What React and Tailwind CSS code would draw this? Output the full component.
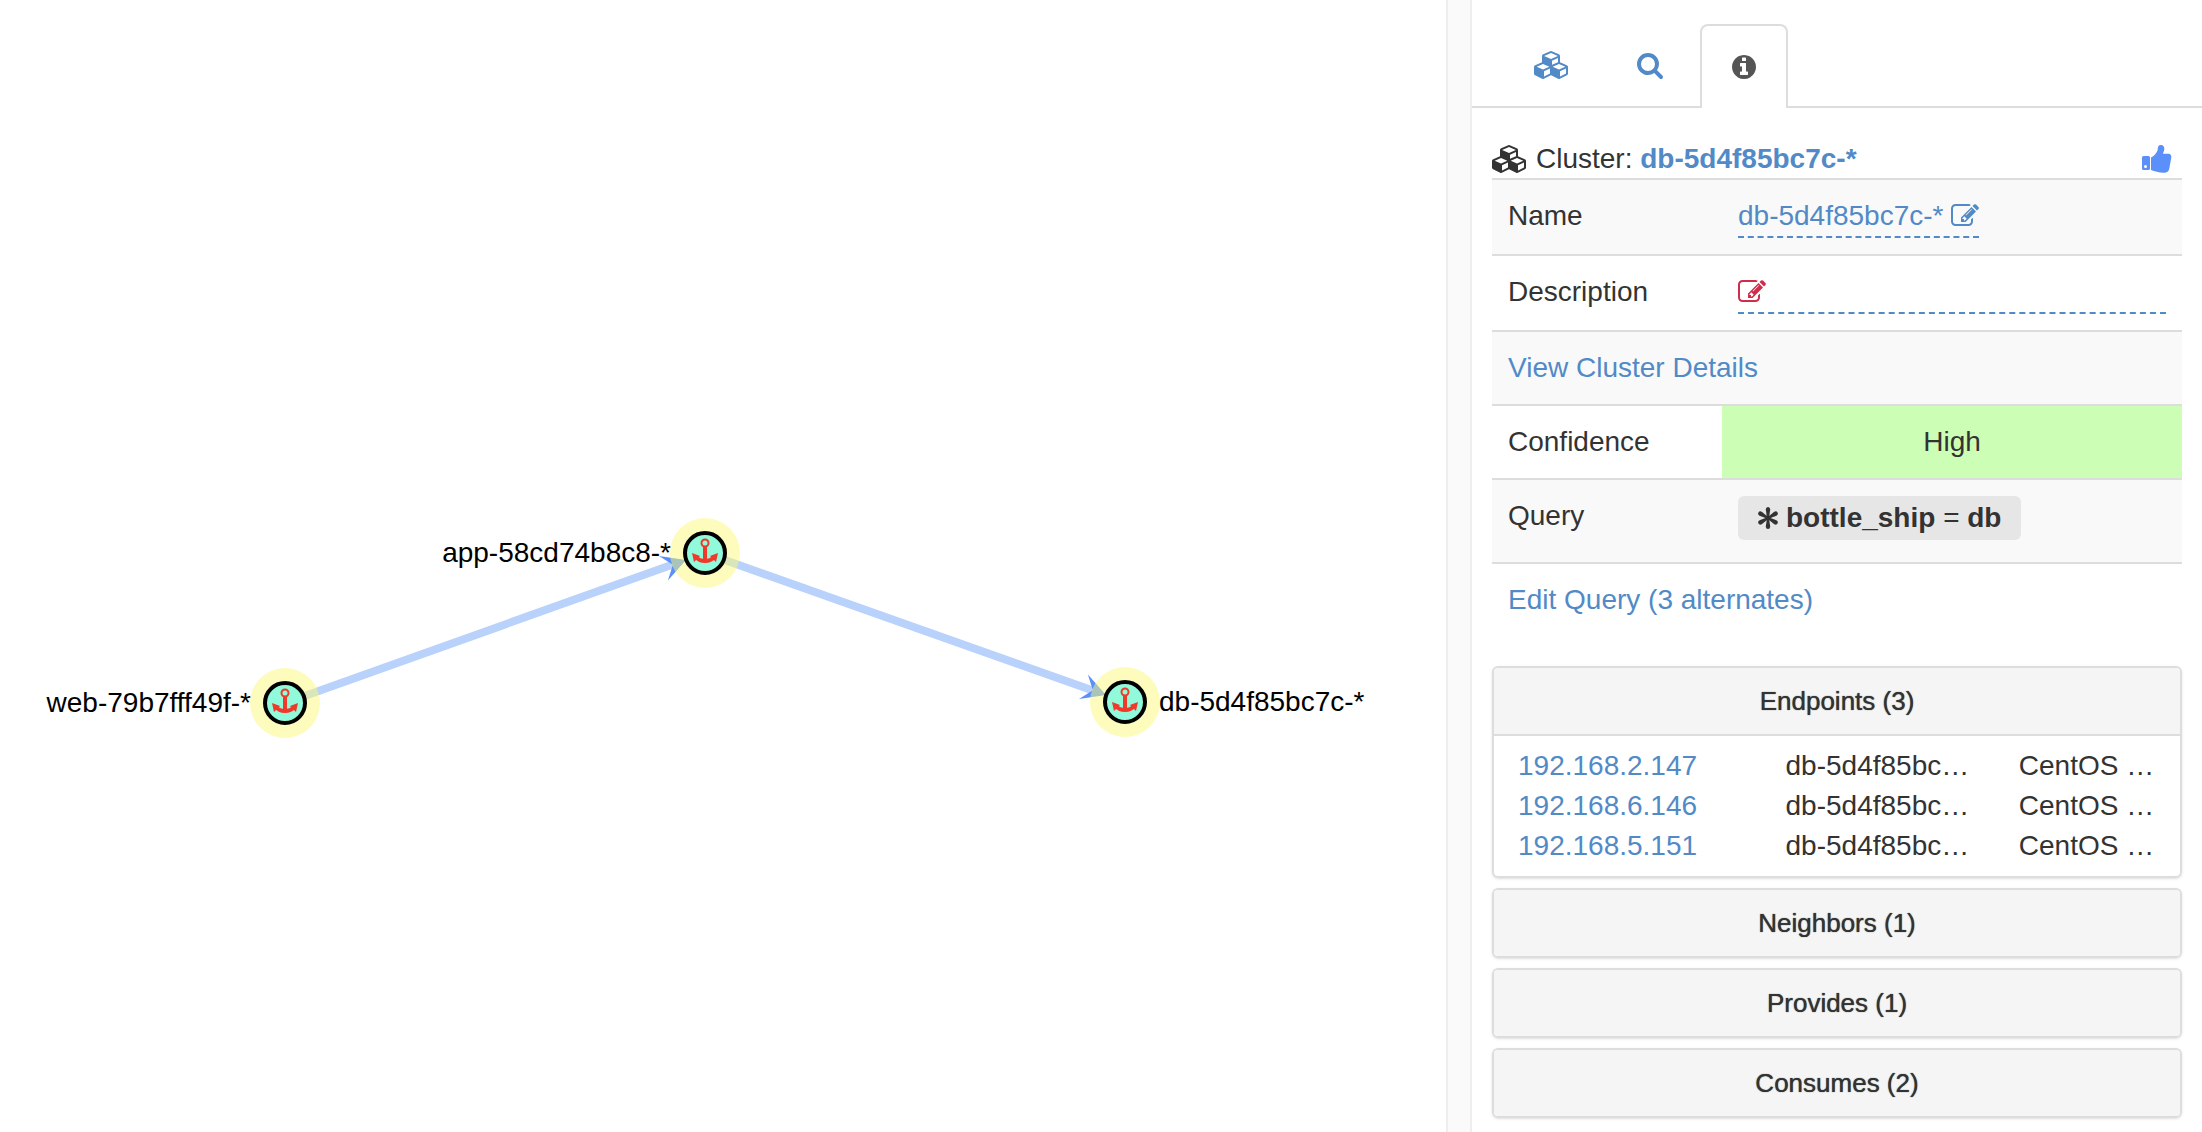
function Icon({ d, width = 1792, className }) {
  return (
    <svg viewBox={`0 0 ${width} 1792`} className={className} fill="currentColor" aria-hidden="true">
      <path d={d} />
    </svg>
  );
}

const CUBES =
  "M640 1632l384-192v-314l-384 164v342zm-64-454l404-173-404-173-404 173zm1088 454l384-192v-314l-384 164v342zm-64-454l404-173-404-173-404 173zm-448-293l384-165v-266l-384 164v267zm-64-379l441-189-441-189-441 189zm1088 518v416q0 36-19 67t-52 47l-448 224q-25 14-57 14t-57-14l-448-224q-4-2-7-4-2 2-7 4l-448 224q-25 14-57 14t-57-14l-448-224q-33-16-52-47t-19-67v-416q0-38 21.5-70t56.5-48l434-186v-400q0-38 21.5-70t56.5-48l448-192q23-10 50-10t50 10l448 192q35 16 56.5 48t21.5 70v400l434 186q36 16 57 48t21 70z";
const SEARCH =
  "M1216 832q0-185-131.5-316.5t-316.5-131.5-316.5 131.5-131.5 316.5 131.5 316.5 316.5 131.5 316.5-131.5 131.5-316.5zm512 832q0 52-38 90t-90 38q-54 0-90-38l-343-342q-179 124-399 124-143 0-273.5-55.5t-225-150-150-225-55.5-273.5 55.5-273.5 150-225 225-150 273.5-55.5 273.5 55.5 225 150 150 225 55.5 273.5q0 220-124 399l343 343q37 37 37 90z";
const INFO =
  "M1152 1376v-160q0-14-9-23t-23-9h-96v-512q0-14-9-23t-23-9h-320q-14 0-23 9t-9 23v160q0 14 9 23t23 9h96v320h-96q-14 0-23 9t-9 23v160q0 14 9 23t23 9h448q14 0 23-9t9-23zm-128-896v-160q0-14-9-23t-23-9h-192q-14 0-23 9t-9 23v160q0 14 9 23t23 9h192q14 0 23-9t9-23zm640 416q0 209-103 385.5t-279.5 279.5-385.5 103-385.5-103-279.5-279.5-103-385.5 103-385.5 279.5-279.5 385.5-103 385.5 103 279.5 279.5 103 385.5z";
const EDIT =
  "M888 1184l116-116-152-152-116 116v56h96v96h56zm440-720q-16-16-33 1l-350 350q-17 17-1 33t33-1l350-350q17-17 1-33zm80 594v190q0 119-84.5 203.5t-203.5 84.5h-832q-119 0-203.5-84.5t-84.5-203.5v-832q0-119 84.5-203.5t203.5-84.5h832q63 0 117 25 15 7 18 23 3 17-9 29l-49 49q-14 14-32 8-23-6-45-6h-832q-66 0-113 47t-47 113v832q0 66 47 113t113 47h832q66 0 113-47t47-113v-126q0-13 9-22l64-64q15-15 35-7t20 29zm-96-738l288 288-672 672h-288v-288zm444 132l-92 92-288-288 92-92q28-28 68-28t68 28l152 152q28 28 28 68t-28 68z";

function ThumbsUp({ className }) {
  return (
    <svg viewBox="0 0 30 28" className={className} fill="currentColor" aria-hidden="true">
      <path
        fillRule="evenodd"
        d="M1.500 11H6.500Q8 11 8 12.500V23.500Q8 25 6.500 25H1.500Q0 25 0 23.500V12.500Q0 11 1.500 11ZM3.500 20A1.500 1.500 0 1 0 3.500 23A1.500 1.500 0 1 0 3.500 20Z"
      />
      <path d="M9 12.500C12 11 14.500 8 15.500 5.500C16 4 15.700 2 16.500 1C17.500 -0.300 20.500 -0.200 21.700 1.500C23 3.500 22 6.500 20.800 8.800H26.500C28.700 9 29.500 10.500 29.300 12.500L27.300 23.500C26.800 26 25.500 27.300 23 27.700C18 28.200 13 26.200 9 25Z" />
    </svg>
  );
}

function Asterisk({ className }) {
  return (
    <svg viewBox="-10 -11 20 22" className={className} fill="currentColor" aria-hidden="true">
      {[0, 60, 120, 180, 240, 300].map((angle) => (
        <path key={angle} transform={`rotate(${angle})`} d="M-1 0L-2.200 -8.500Q-2.200 -11 0 -11T2.200 -8.500L1 0Z" />
      ))}
    </svg>
  );
}

const NODES = [
  { id: "web", x: 285, y: 703, label: "web-79b7fff49f-*", side: "left" },
  { id: "app", x: 705, y: 553, label: "app-58cd74b8c8-*", side: "left" },
  { id: "db", x: 1125, y: 702, label: "db-5d4f85bc7c-*", side: "right" },
];

function Anchor() {
  return (
    <g fill="none" stroke="#f0392b">
      <circle cy="-10" r="3.500" strokeWidth="2" />
      <path d="M0 -6V9" strokeWidth="4" />
      <path d="M-9 4Q-6 8 0 8T9 4" strokeWidth="4" />
      <path d="M-13 0L-5 3L-11 9ZM13 0L5 3L11 9Z" fill="#f0392b" stroke="none" />
    </g>
  );
}

function Graph() {
  return (
    <svg className="block h-full w-full" role="img" aria-label="Cluster graph" fontFamily="Liberation Sans, Arial, sans-serif" fontSize="28">
      <g stroke="#b9d2fb" strokeWidth="8">
        <path d="M285 703L677 563" />
        <path d="M705 553L1097 692" />
      </g>
      {["translate(686 560) rotate(-20)", "translate(1106 695) rotate(20)"].map((t) => (
        <path key={t} transform={t} d="M0 0L-24 -13L-14 0L-24 13Z" fill="#5b8ff9" />
      ))}
      {NODES.map((n) => (
        <g key={n.id} transform={`translate(${n.x} ${n.y})`}>
          <circle r="35" fill="#fbf97a" fillOpacity="0.5" />
          <circle r="20" fill="#90fadb" stroke="#000" strokeWidth="4" />
          <Anchor />
          <text x={n.side === "left" ? -34 : 34} y="9" textAnchor={n.side === "left" ? "end" : "start"}>
            {n.label}
          </text>
        </g>
      ))}
    </svg>
  );
}

function Tabs() {
  return (
    <div role="tablist" className="mt-6 flex h-[84px] items-stretch border-b-2 border-[#ddd] pl-8 text-[#518ac6]">
      <button type="button" role="tab" aria-selected="false" aria-label="Clusters" className="flex w-24 items-center justify-center">
        <Icon d={CUBES} width={2304} className="h-7 w-9" />
      </button>
      <button type="button" role="tab" aria-selected="false" aria-label="Search" className="flex w-[100px] items-center justify-center">
        <Icon d={SEARCH} className="size-7" />
      </button>
      <button type="button" role="tab" aria-selected="true" aria-label="Details" className="-mb-0.5 flex w-[88px] items-center justify-center rounded-t-lg border-2 border-b-0 border-[#ddd] bg-white text-[#555]">
        <Icon d={INFO} className="size-7" />
      </button>
    </div>
  );
}

const ENDPOINTS = ["192.168.2.147", "192.168.6.146", "192.168.5.151"];

function Details() {
  return (
    <table className="w-full table-fixed border-collapse text-left">
      <colgroup>
        <col className="w-1/3" />
        <col />
      </colgroup>
      <tbody className="[&>tr]:border-t-2 [&>tr]:border-[#ddd] [&>tr:nth-child(odd)]:bg-[#f9f9f9]">
        <tr>
          <th scope="row" className="p-4 align-top font-normal">Name</th>
          <td className="p-4 align-top">
            <button type="button" className="flex items-center gap-2 border-b-2 border-dashed border-[#518ac6] text-[#518ac6]">
              db-5d4f85bc7c-*
              <Icon d={EDIT} className="size-7" />
            </button>
          </td>
        </tr>
        <tr>
          <th scope="row" className="p-4 align-top font-normal">Description</th>
          <td className="p-4 align-top">
            <button type="button" aria-label="Edit description" className="flex h-[42px] w-full items-center border-b-2 border-dashed border-[#518ac6] text-[#cf2e4b]">
              <Icon d={EDIT} className="size-7" />
            </button>
          </td>
        </tr>
        <tr>
          <td colSpan={2} className="p-4">
            <a href="#details" className="text-[#518ac6]">View Cluster Details</a>
          </td>
        </tr>
        <tr>
          <th scope="row" className="p-4 font-normal">Confidence</th>
          <td className="bg-[#cdfeb5] p-4 text-center">High</td>
        </tr>
        <tr>
          <th scope="row" className="p-4 align-top font-normal">Query</th>
          <td className="px-4 pt-4 pb-[22px]">
            <span className="flex h-11 w-fit items-center gap-2 rounded-md bg-[#e6e6e6] px-5 font-bold">
              <Asterisk className="h-[22px] w-5" />
              <span>
                bottle_ship <span className="font-normal">=</span> db
              </span>
            </span>
          </td>
        </tr>
        <tr className="bg-white!">
          <td colSpan={2} className="p-4">
            <a href="#query" className="text-[#518ac6]">Edit Query (3 alternates)</a>
          </td>
        </tr>
      </tbody>
    </table>
  );
}

function Panel({ title, children }) {
  return (
    <section className="overflow-hidden rounded-md border-2 border-[#ddd] shadow-sm">
      <h2>
        <button
          type="button"
          aria-expanded={Boolean(children)}
          className="block h-[66px] w-full bg-[#f5f5f5] text-center text-[26px] font-medium [text-shadow:0_0_1px_#333]"
        >
          {title}
        </button>
      </h2>
      {children}
    </section>
  );
}

export default function App() {
  return (
    <div className="flex h-screen overflow-hidden bg-white font-['Liberation_Sans',Arial,sans-serif] text-[28px] leading-10 text-[#333]">
      <main className="min-w-0 flex-1">
        <Graph />
      </main>
      <div className="w-[26px] shrink-0 border-x-2 border-[#eee] bg-[#fafafa]" />
      <aside className="w-[730px] shrink-0">
        <Tabs />
        <div className="px-5 pt-8">
          <div className="flex h-[38px] items-center">
            <Icon d={CUBES} width={2304} className="mr-2 h-7 w-9" />
            <h1>
              Cluster: <a href="#cluster" className="font-bold text-[#518ac6]">db-5d4f85bc7c-*</a>
            </h1>
            <button type="button" aria-label="Approve" className="mr-2.5 ml-auto text-[#5b8ff9]">
              <ThumbsUp className="h-7 w-[30px]" />
            </button>
          </div>
          <Details />
          <div className="mt-[30px] flex flex-col gap-2.5">
            <Panel title="Endpoints (3)">
              <div className="border-t-2 border-[#ddd] py-2.5">
                <table className="w-full table-fixed text-left">
                  <tbody>
                    {ENDPOINTS.map((ip) => (
                      <tr key={ip}>
                        <td className="w-[39%] pl-6">
                          <a href="#endpoint" className="text-[#518ac6]">{ip}</a>
                        </td>
                        <td className="w-[34%] truncate pl-6">db-5d4f85bc…</td>
                        <td className="truncate pl-6">CentOS …</td>
                      </tr>
                    ))}
                  </tbody>
                </table>
              </div>
            </Panel>
            <Panel title="Neighbors (1)" />
            <Panel title="Provides (1)" />
            <Panel title="Consumes (2)" />
          </div>
        </div>
      </aside>
    </div>
  );
}
